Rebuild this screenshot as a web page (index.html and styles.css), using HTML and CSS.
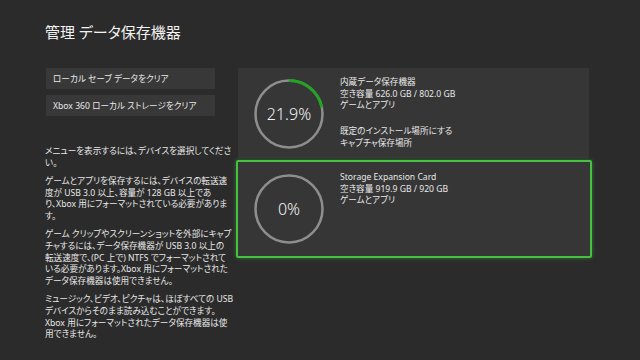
FILE: index.html
```html
<!DOCTYPE html>
<html lang="ja">
<head>
    <meta charset="UTF-8">
    <meta name="viewport" content="width=device-width, initial-scale=1.0">
    <title>データ保存機器の管理</title>
    <link rel="stylesheet" href="styles.css">
</head>
<body>
    <div class="page">
        <h1>管理 データ保存機器</h1>
        <div class="layout">
            <div class="side">
                <button class="action">ローカル セーブ データをクリア</button>
                <button class="action">Xbox 360 ローカル ストレージをクリア</button>
                <div class="help">
                    <p>メニューを表示するには、デバイスを選択してくださ<br>い。</p>
                    <p>ゲームとアプリを保存するには、デバイスの転送速<br>度が USB 3.0 以上、容量が 128 GB 以上であ<br>り、Xbox 用にフォーマットされている必要がありま<br>す。</p>
                    <p>ゲーム クリップやスクリーンショットを外部にキャプ<br>チャするには、データ保存機器が USB 3.0 以上の<br>転送速度で、(PC 上で) NTFS でフォーマットされて<br>いる必要があります。Xbox 用にフォーマットされた<br>データ保存機器は使用できません。</p>
                    <p>ミュージック、ビデオ、ピクチャは、ほぼすべての USB<br>デバイスからそのまま読み込むことができます。<br>Xbox 用にフォーマットされたデータ保存機器は使<br>用できません。</p>
                </div>
            </div>
            <div class="devices">
                <div class="device">
                    <div class="ring">
                        <svg viewBox="0 0 70 70" width="70" height="70">
                            <circle class="track" cx="35" cy="35" r="33.5"></circle>
                            <circle class="used" cx="35" cy="35" r="33.5" pathLength="100" style="stroke-dasharray: 21.9 100"></circle>
                        </svg>
                        <span class="percent">21.9%</span>
                    </div>
                    <div class="info">
                        <div>内蔵データ保存機器</div>
                        <div>空き容量 626.0 GB / 802.0 GB</div>
                        <div>ゲームとアプリ</div>
                        <div class="extra">
                            <div>既定のインストール場所にする</div>
                            <div>キャプチャ保存場所</div>
                        </div>
                    </div>
                </div>
                <div class="device selected">
                    <div class="ring">
                        <svg viewBox="0 0 70 70" width="70" height="70">
                            <circle class="track" cx="35" cy="35" r="33.5"></circle>
                        </svg>
                        <span class="percent">0%</span>
                    </div>
                    <div class="info">
                        <div>Storage Expansion Card</div>
                        <div>空き容量 919.9 GB / 920 GB</div>
                        <div>ゲームとアプリ</div>
                    </div>
                </div>
            </div>
        </div>
    </div>
</body>
</html>
```

FILE: styles.css
```css
body {
    margin: 0;
    background-color: #2b2b2b;
    color: #e8e8e8;
    font-family: "Noto Sans", "Noto Sans CJK JP", sans-serif;
    font-feature-settings: "palt";
}
.page {
    padding: 22px 0 0 45px;
}
h1 {
    margin: 0 0 26px;
    font-size: 15px;
    font-weight: normal;
    line-height: 20px;
    color: #f2f2f2;
}
.layout {
    display: flex;
    gap: 23px;
}
.side {
    width: 170px;
    display: flex;
    flex-direction: column;
    gap: 6px;
}
.action {
    height: 21px;
    margin-left: 1px;
    padding: 0 7px;
    background-color: #383838;
    color: #e8e8e8;
    border: none;
    text-align: left;
    font-family: inherit;
    font-feature-settings: "palt";
    font-size: 8.6px;
}
.help {
    margin-top: 24px;
    font-size: 8.6px;
    line-height: 11.7px;
    white-space: nowrap;
}
.help p {
    margin: 0 0 6.5px;
}
.devices {
    width: 351px;
    display: flex;
    flex-direction: column;
}
.device {
    display: flex;
    gap: 16px;
    padding: 11px 16px 9px;
    background-color: #363636;
}
.device.selected {
    margin: 2px -3px 0 -2px;
    padding: 12px 16px;
    border: 2px solid #45c23f;
    border-radius: 2px;
    box-shadow: 0 0 4px rgba(69, 194, 63, 0.45);
}
.ring {
    display: grid;
    width: 70px;
    height: 70px;
}
.ring svg,
.ring .percent {
    grid-area: 1 / 1;
}
.ring circle {
    fill: none;
}
.ring .track {
    stroke: #8e8e8e;
    stroke-width: 2.5;
}
.ring .used {
    stroke: #23a323;
    stroke-width: 3;
    transform: rotate(-90deg);
    transform-origin: 35px 35px;
}
.percent {
    align-self: center;
    justify-self: center;
    font-size: 16px;
    font-weight: 300;
    color: #f4f4f4;
}
.info {
    margin-top: -2px;
    font-size: 8.6px;
    line-height: 11.5px;
}
.extra {
    margin-top: 14.5px;
}
```
